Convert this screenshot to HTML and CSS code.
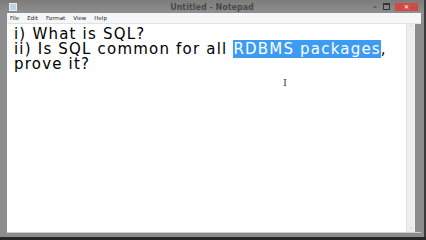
FILE: index.html
```html
<!DOCTYPE html>
<html>
<head>
<meta charset="utf-8">
<link rel="stylesheet" href="styles.css">
</head>
<body>
<div class="window">
  <div class="titlebar">
    <div class="app-icon"></div>
    <div class="title">Untitled - Notepad</div>
    <div class="controls">
      <span class="ctl min">&#8211;</span>
      <span class="ctl max"></span>
      <span class="ctl close">&#215;</span>
    </div>
  </div>
  <div class="client">
    <div class="menubar">
      <span>File</span><span>Edit</span><span>Format</span><span>View</span><span>Help</span>
    </div>
    <div class="editor-row">
      <div class="editor">
        <div class="line">i) What is SQL?</div>
        <div class="line">ii) Is SQL common for all <span class="sel">RDBMS packages</span>,</div>
        <div class="line">prove it?</div>
        <div class="ibeam">I</div>
      </div>
      <div class="scrollbar">
        <span class="arrow up">&#708;</span>
        <span class="arrow down">&#709;</span>
      </div>
    </div>
  </div>
  <div class="bottom-frame"></div>
</div>
</body>
</html>
```
FILE: styles.css
```css
html, body {
  margin: 0;
  padding: 0;
  width: 426px;
  height: 240px;
  overflow: hidden;
  background: #2a2623;
}
.window {
  width: 424px;
  height: 237px;
  background: #8d8d8d;
  display: flex;
  flex-direction: column;
  border-right: 2px solid #3a3a3a;
}
.titlebar {
  height: 13px;
  display: flex;
  align-items: center;
  position: relative;
  background: linear-gradient(#7d7c7b, #8f8f8f);
}
.app-icon {
  width: 6px;
  height: 6px;
  margin-left: 9px;
  background: #b9d3e4;
  border: 1px solid #e5eef4;
}
.title {
  position: absolute;
  left: 0;
  right: 0;
  text-align: center;
  font: bold 8px "DejaVu Sans", sans-serif;
  color: #4a4a4a;
  top: 3px;
}
.controls {
  margin-left: auto;
  display: flex;
  align-items: center;
  height: 8px;
  margin-right: 6px;
}
.ctl {
  font: bold 7px "DejaVu Sans", sans-serif;
  color: #333;
  text-align: center;
  line-height: 8px;
}
.min { width: 10px; margin-right: 3px; }
.max { width: 5px; height: 4px; border: 1px solid #333; border-top-width: 2px; margin-right: 5px; }
.close {
  width: 23px;
  height: 8px;
  background: #d14a45;
  color: #f8dcdc;
}
.client {
  flex: 1;
  margin: 0 3px 0 7px;
  display: flex;
  flex-direction: column;
  background: #fff;
}
.menubar {
  height: 10px;
  background: #f4f6f8;
  border-bottom: 1px solid #dde3ea;
  display: flex;
  align-items: center;
  font: 5.5px "DejaVu Sans", sans-serif;
  color: #222;
  padding-left: 3px;
}
.menubar span { margin-right: 8px; }
.editor-row {
  flex: 1;
  display: flex;
  border-bottom: 1px solid #c9ced4;
}
.editor {
  flex: 1;
  position: relative;
  padding: 3px 0 0 7px;
  font: 15px "DejaVu Sans", sans-serif;
  letter-spacing: 1.2px;
  line-height: 15px;
  color: #000;
}
.line { white-space: pre; }
.sel {
  background: #3d9bf2;
  color: #fff;
}
.ibeam {
  position: absolute;
  left: 276px;
  top: 53px;
  font: 10px "DejaVu Serif", serif;
  color: #444;
}
.scrollbar {
  width: 8px;
  background: #eeeeee;
  border-left: 1px solid #e2e2e2;
  display: flex;
  flex-direction: column;
  justify-content: space-between;
  align-items: center;
  font: 5px "DejaVu Sans", sans-serif;
  color: #999;
  border-right: 6px solid #8d8d8d;
}
.bottom-frame {
  height: 4px;
}
```
